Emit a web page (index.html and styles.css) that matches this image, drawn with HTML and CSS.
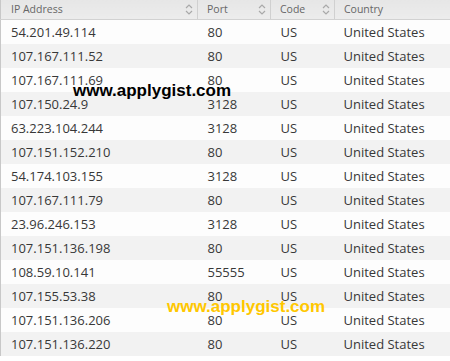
FILE: index.html
```html
<!DOCTYPE html>
<html>
<head>
<meta charset="utf-8">
<link rel="stylesheet" href="styles.css">
</head>
<body>
<div class="wrap">
<table class="proxy">
  <colgroup>
    <col class="c-ip"><col class="c-port"><col class="c-code"><col class="c-country">
  </colgroup>
  <thead>
    <tr>
      <th><span class="th-in">IP Address<svg class="sort" viewBox="0 0 8 11" width="8" height="11"><path d="M1 4 L4 1 L7 4 M1 7 L4 10 L7 7" fill="none" stroke="#a9a9a9" stroke-width="1.2"/></svg></span></th>
      <th class="sep"><span class="th-in">Port<svg class="sort" viewBox="0 0 8 11" width="8" height="11"><path d="M1 4 L4 1 L7 4 M1 7 L4 10 L7 7" fill="none" stroke="#a9a9a9" stroke-width="1.2"/></svg></span></th>
      <th class="sep"><span class="th-in">Code<svg class="sort" viewBox="0 0 8 11" width="8" height="11"><path d="M1 4 L4 1 L7 4 M1 7 L4 10 L7 7" fill="none" stroke="#a9a9a9" stroke-width="1.2"/></svg></span></th>
      <th class="sep"><span class="th-in">Country</span></th>
    </tr>
  </thead>
  <tbody>
    <tr><td>54.201.49.114</td><td>80</td><td>US</td><td>United States</td></tr>
    <tr><td>107.167.111.52</td><td>80</td><td>US</td><td>United States</td></tr>
    <tr><td>107.167.111.69</td><td>80</td><td>US</td><td>United States</td></tr>
    <tr><td>107.150.24.9</td><td>3128</td><td>US</td><td>United States</td></tr>
    <tr><td>63.223.104.244</td><td>3128</td><td>US</td><td>United States</td></tr>
    <tr><td>107.151.152.210</td><td>80</td><td>US</td><td>United States</td></tr>
    <tr><td>54.174.103.155</td><td>3128</td><td>US</td><td>United States</td></tr>
    <tr><td>107.167.111.79</td><td>80</td><td>US</td><td>United States</td></tr>
    <tr><td>23.96.246.153</td><td>3128</td><td>US</td><td>United States</td></tr>
    <tr><td>107.151.136.198</td><td>80</td><td>US</td><td>United States</td></tr>
    <tr><td>108.59.10.141</td><td>55555</td><td>US</td><td>United States</td></tr>
    <tr><td>107.155.53.38</td><td>80</td><td>US</td><td>United States</td></tr>
    <tr><td>107.151.136.206</td><td>80</td><td>US</td><td>United States</td></tr>
    <tr><td>107.151.136.220</td><td>80</td><td>US</td><td>United States</td></tr>
  </tbody>
</table>
<div class="wm wm-black">www.applygist.com</div>
<div class="wm wm-yellow">www.applygist.com</div>
</div>
</body>
</html>
```
FILE: styles.css
```css
html, body {
  margin: 0;
  padding: 0;
  background: #fff;
}
.wrap {
  position: relative;
  width: 450px;
  height: 361px;
  overflow: hidden;
}
.proxy {
  border-collapse: collapse;
  table-layout: fixed;
  width: 520px;
  font-family: "Open Sans", sans-serif;
  border-left: 1px solid #c8c8c8;
}
.c-ip { width: 197px; }
.c-port { width: 73px; }
.c-code { width: 64px; }
.c-country { width: 186px; }
.proxy th {
  height: 19px;
  padding: 0;
  background: linear-gradient(#e6e6e6, #ececec);
  border-bottom: 1px solid #d2d2d2;
  font-size: 10.5px;
  font-weight: normal;
  color: #666;
  text-align: left;
  vertical-align: middle;
}
.proxy th.sep {
  border-left: 1px solid #d0d0d0;
}
.th-in {
  display: flex;
  align-items: center;
  justify-content: space-between;
  padding: 0 4px 0 10px;
  line-height: 19px;
}
.proxy th:first-child .th-in { padding-left: 10px; }
.proxy th.sep .th-in { padding-left: 9px; }
.sort {
  display: block;
  flex: none;
}
.proxy td {
  height: 24px;
  padding: 0 0 0 10px;
  font-size: 13px;
  color: #383838;
  white-space: nowrap;
  vertical-align: middle;
  line-height: 24px;
}
.proxy td:nth-child(4) { padding-left: 9px; }
.proxy tbody tr:nth-child(odd) td { background: #fdfdfd; }
.proxy tbody tr:nth-child(even) td { background: #f2f2f2; }
.wm {
  position: absolute;
  font-family: "Liberation Sans", Arial, sans-serif;
  font-weight: bold;
  font-size: 17px;
  line-height: 17px;
  white-space: nowrap;
}
.wm-black {
  left: 73px;
  top: 82px;
  color: #000;
}
.wm-yellow {
  left: 167px;
  top: 298px;
  color: #ffc700;
}
```
